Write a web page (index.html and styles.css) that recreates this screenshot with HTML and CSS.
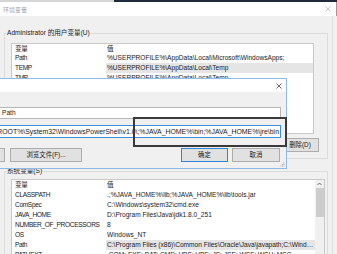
FILE: index.html
```html
<!DOCTYPE html>
<html lang="zh-CN">
<head>
<meta charset="utf-8">
<title>环境变量</title>
<link rel="stylesheet" href="styles.css">
</head>
<body>
<div class="topstrip"><div class="ts-left"></div><div class="ts-right"></div></div>
<div class="titlebar">
  <span class="ttext">环境变量</span>
  <svg class="xicon" width="6" height="6" viewBox="0 0 6 6"><path d="M0.5 0.5L5.5 5.5M5.5 0.5L0.5 5.5" stroke="#b0b0b0" stroke-width="0.7" fill="none"/></svg>
</div>
<div class="main">
  <fieldset class="group user">
    <legend>Administrator 的用户变量(U)</legend>
    <div class="list ulist">
      <div class="row head uhead"><span class="c1">变量</span><span class="c2">值</span></div>
      <div class="row"><span class="c1">Path</span><span class="c2">%USERPROFILE%\AppData\Local\Microsoft\WindowsApps;</span></div>
      <div class="row sel"><span class="c1">TEMP</span><span class="c2">%USERPROFILE%\AppData\Local\Temp</span></div>
      <div class="row"><span class="c1">TMP</span><span class="c2">%USERPROFILE%\AppData\Local\Temp</span></div>
    </div>
    <div class="btnrow">
      <button class="btn bw">新建(N)...</button>
      <button class="btn bw">编辑(E)...</button>
      <button class="btn bd">删除(D)</button>
    </div>
  </fieldset>
  <fieldset class="group sys">
    <legend>系统变量(S)</legend>
    <div class="list slist">
      <div class="rows">
        <div class="row head shead"><span class="c1">变量</span><span class="c2">值</span></div>
        <div class="row"><span class="c1">CLASSPATH</span><span class="c2">.;%JAVA_HOME%\lib;%JAVA_HOME%\lib\tools.jar</span></div>
        <div class="row"><span class="c1">ComSpec</span><span class="c2">C:\Windows\system32\cmd.exe</span></div>
        <div class="row"><span class="c1">JAVA_HOME</span><span class="c2">D:\Program Files\Java\jdk1.8.0_251</span></div>
        <div class="row"><span class="c1">NUMBER_OF_PROCESSORS</span><span class="c2">8</span></div>
        <div class="row"><span class="c1">OS</span><span class="c2">Windows_NT</span></div>
        <div class="row sel"><span class="c1">Path</span><span class="c2">C:\Program Files (x86)\Common Files\Oracle\Java\javapath;C:\Windows\system32;C:\Windows</span></div>
        <div class="row"><span class="c1">PATHEXT</span><span class="c2">.COM;.EXE;.BAT;.CMD;.VBS;.VBE;.JS;.JSE;.WSF;.WSH;.MSC</span></div>
      </div>
      <div class="scrollbar">
        <svg class="uparrow" width="9" height="8" viewBox="0 0 9 8"><path d="M2.5 5L4.5 3L6.5 5" stroke="#606060" stroke-width="0.9" fill="none"/></svg>
        <div class="thumb"></div>
      </div>
    </div>
  </fieldset>
</div>

<div class="dialog">
  <div class="dtitle">
    <svg class="xicon" width="6" height="6" viewBox="0 0 6 6"><path d="M0.5 0.5L5.5 5.5M5.5 0.5L0.5 5.5" stroke="#444" stroke-width="0.8" fill="none"/></svg>
  </div>
  <div class="dbody">
    <div class="drow"><div class="field fname">Path</div></div>
    <div class="drow"><div class="field fvalue focus"><span>%SystemROOT%\System32\WindowsPowerShell\v1.0\;%JAVA_HOME%\bin;%JAVA_HOME%\jre\bin</span></div></div>
    <div class="dbtns">
      <div class="bgroup lgroup">
        <button class="btn b1">编辑文本(T)...</button>
        <button class="btn b2">浏览文件(F)...</button>
      </div>
      <div class="bgroup rgroup">
        <button class="btn bok">确定</button>
        <button class="btn bcancel">取消</button>
      </div>
    </div>
  </div>
  <svg class="grip" width="5" height="5" viewBox="0 0 5 5"><g fill="#b0b0b0"><rect x="3.5" y="0.5" width="1" height="1"/><rect x="2" y="2" width="1" height="1"/><rect x="3.5" y="2" width="1" height="1"/><rect x="0.5" y="3.5" width="1" height="1"/><rect x="2" y="3.5" width="1" height="1"/><rect x="3.5" y="3.5" width="1" height="1"/></g></svg>
</div>

<div class="annot"></div>
</body>
</html>
```
FILE: styles.css
```css
* { box-sizing: border-box; }
html, body { margin: 0; padding: 0; }
body {
  width: 337px;
  height: 254px;
  overflow: hidden;
  position: relative;
  background: #f0f0f0;
  font-family: "Liberation Sans", "Noto Sans CJK SC", sans-serif;
  font-size: 6.6px;
  color: #1a1a1a;
}
.topstrip { display: flex; height: 2px; }
.ts-left { width: 114px; background: #d6d6d6; }
.ts-right { flex: 1; background: #1e2b3b; }
.titlebar {
  height: 14px;
  background: #fff;
  display: flex;
  align-items: center;
  justify-content: space-between;
  padding: 0 5px 0 3px;
  border-right: 1px solid #9a9a9a;
}
.ttext { font-size: 6px; color: #a0a0a0; }
.xicon { display: block; }
.main {
  padding: 13px 4px 0 4px;
  border-right: 1px solid #e0e0e0;
  width: 333px;
}
.group {
  margin: 0;
  padding: 0 8px 6px 2px;
  border: 1px solid #dcdcdc;
  min-width: 0;
}
.group legend {
  padding: 0;
  line-height: 8px;
  height: 8px;
  font-size: 6.6px;
}
.list {
  background: #fff;
  border: 1px solid #c9c9c9;
  margin-left: 4px;
}
.ulist { width: 303px; height: 91px; margin-top: 6px; }
.row {
  display: grid;
  grid-template-columns: 94px 1fr;
  height: 10px;
  line-height: 10px;
  white-space: nowrap;
}
.row .c1 { padding-left: 3px; overflow: hidden; letter-spacing: -0.35px; }
.row .c2 { padding-left: 1px; overflow: hidden; text-overflow: ellipsis; }
.uhead { height: 9px; line-height: 9px; }
.row.sel .c2 { background: #e5e5e5; }
.btnrow {
  display: flex;
  justify-content: flex-end;
  gap: 4px;
  margin-top: 4px;
}
.btn {
  font-family: "Liberation Sans", "Noto Sans CJK SC", sans-serif;
  font-size: 6.4px;
  color: #222;
  background: #e1e1e1;
  border: 1px solid #adadad;
  height: 14px;
  padding: 0;
  margin: 0;
  line-height: 12px;
  text-align: center;
}
.bw { width: 38px; }
.bd { width: 38px; }
.sys { margin-top: 8px; padding-bottom: 0; border-bottom: none; }
.slist {
  width: 314px;
  height: 80px;
  margin-top: 4px;
  display: flex;
  border-bottom: none;
}
.rows { flex: 1; min-width: 0; }
.scrollbar {
  width: 9px;
  background: #f0f0f0;
  display: flex;
  flex-direction: column;
  align-items: center;
}
.uparrow { display: block; }
.thumb { width: 8px; height: 29px; background: #cdcdcd; }

.dialog {
  position: absolute;
  top: 78px;
  left: -60px;
  width: 347px;
  height: 91px;
  border: 1px solid #8dbbe6;
  background: #f0f0f0;
  overflow: hidden;
}
.dtitle {
  height: 13px;
  background: #fff;
  display: flex;
  align-items: center;
  justify-content: flex-end;
  padding-right: 4px;
}
.dbody { padding: 15px 5px 0 5px; }
.drow { display: flex; align-items: center; padding-left: 53px; }
.drow + .drow { margin-top: 6px; }
.field {
  flex: 1;
  min-width: 0;
  background: #fff;
  border: 1px solid #b5b5b5;
  height: 12px;
  line-height: 10px;
  padding: 0 1px 0 2px;
  white-space: nowrap;
  overflow: hidden;
}
.field.focus {
  height: 13px;
  line-height: 11px;
  font-size: 6.9px;
  border-color: #3d8fd9;
  display: flex;
  justify-content: flex-end;
}
.field.focus span { flex: none; }
.dbtns {
  display: flex;
  justify-content: space-between;
  margin-top: 10px;
  padding-right: 1px;
}
.bgroup { display: flex; }
.lgroup { gap: 5px; }
.rgroup { gap: 4px; }
.b1 { width: 59px; }
.b2 { width: 72px; }
.bok { width: 47px; border-color: #2f86d6; }
.bcancel { width: 48px; }
.grip { position: absolute; right: 1px; bottom: 1px; }

.annot {
  position: absolute;
  left: 133px;
  top: 117px;
  width: 154px;
  height: 30px;
  border: 2px solid #3a3a3a;
}
```
